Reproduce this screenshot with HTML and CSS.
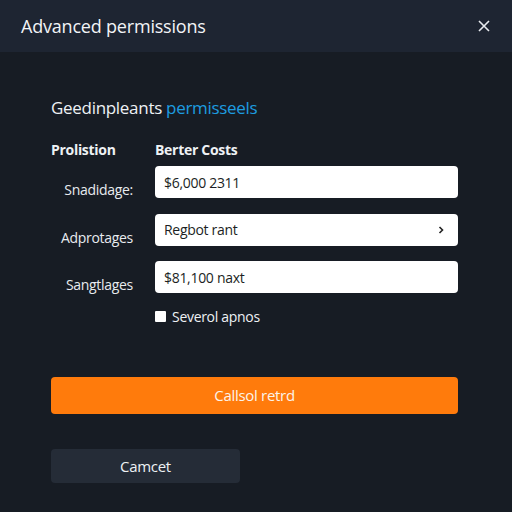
FILE: index.html
```html
<!DOCTYPE html>
<html lang="en">
<head>
  <meta charset="UTF-8" />
  <meta name="viewport" content="width=device-width, initial-scale=1.0">
  <title>Advanced permissions</title>
  <link rel="stylesheet" href="styles.css">
</head>
<body>
  <div class="dialog">
    <div class="dialog-header">
      <h1>Advanced permissions</h1>
      <button class="close-button" aria-label="Close">
        <svg width="12" height="12" viewBox="0 0 12 12"><path d="M1 1 L11 11 M11 1 L1 11" stroke="#e8ebef" stroke-width="1.6" fill="none"/></svg>
      </button>
    </div>

    <div class="dialog-body">
      <h2>Geedinpleants <span class="accent">permisseels</span></h2>

      <div class="form-grid">
        <div class="col-head">Prolistion</div>
        <div class="col-head">Berter Costs</div>

        <label class="row-label">Snadidage:</label>
        <div class="field">$6,000 2311</div>

        <label class="row-label">Adprotages</label>
        <div class="field select">Regbot rant
          <svg width="6" height="8" viewBox="0 0 6 8"><path d="M1.5 1 L4.5 4 L1.5 7" stroke="#222" stroke-width="1.6" fill="none"/></svg>
        </div>

        <label class="row-label">Sangtlages</label>
        <div class="field">$81,100 naxt</div>

        <div></div>
        <label class="check"><span class="box"></span> Severol apnos</label>
      </div>

      <button class="primary-button">Callsol retrd</button>
      <button class="cancel-button">Camcet</button>
    </div>
  </div>
</body>
</html>
```

FILE: styles.css
```css
body {
  margin: 0;
  font-family: "Open Sans", "Noto Sans", Arial, sans-serif;
  background-color: #171c24;
  color: #eef1f4;
}
.dialog {
  width: 512px;
  height: 512px;
}
.dialog-header {
  height: 52px;
  background: #1e2532;
  display: flex;
  align-items: center;
  justify-content: space-between;
  padding: 0 22px 0 21px;
  box-sizing: border-box;
}
.dialog-header h1 {
  margin: 0;
  font-size: 18px;
  font-weight: 400;
  color: #f2f4f7;
  letter-spacing: -0.2px;
}
.close-button {
  background: none;
  border: none;
  padding: 0;
  display: flex;
}
.dialog-body {
  padding: 44px 54px 0 51px;
}
.dialog-body h2 {
  margin: 0;
  font-size: 17px;
  font-weight: 400;
  letter-spacing: -0.3px;
  color: #eef1f4;
}
.accent {
  color: #1d9ce0;
}
.form-grid {
  display: grid;
  grid-template-columns: 104px 303px;
  align-items: center;
  margin-top: 21px;
}
.col-head {
  font-size: 14px;
  font-weight: 700;
  letter-spacing: -0.3px;
  margin-bottom: 7px;
}
.row-label {
  font-size: 14px;
  text-align: right;
  padding-right: 22px;
  letter-spacing: -0.3px;
  color: #e8ebef;
}
.field {
  height: 32px;
  background: #ffffff;
  border-radius: 4px;
  color: #1c1f24;
  font-size: 14px;
  letter-spacing: -0.3px;
  display: flex;
  align-items: center;
  justify-content: space-between;
  padding: 0 14px 0 9px;
  margin-bottom: 15.5px;
}
.check {
  display: flex;
  align-items: center;
  gap: 6px;
  font-size: 14px;
  letter-spacing: -0.3px;
  margin-top: -2px;
}
.box {
  width: 11px;
  height: 11px;
  background: #ffffff;
  border-radius: 1px;
}
.primary-button {
  display: block;
  width: 407px;
  height: 37px;
  margin-top: 51px;
  background: #ff7b0c;
  color: #fbf3ea;
  border: none;
  border-radius: 4px;
  font-family: inherit;
  font-size: 15px;
  letter-spacing: -0.3px;
}
.cancel-button {
  display: block;
  width: 189px;
  height: 34px;
  margin-top: 35px;
  background: #252c37;
  color: #eef1f4;
  border: none;
  border-radius: 4px;
  font-family: inherit;
  font-size: 15px;
  letter-spacing: -0.3px;
}
```
